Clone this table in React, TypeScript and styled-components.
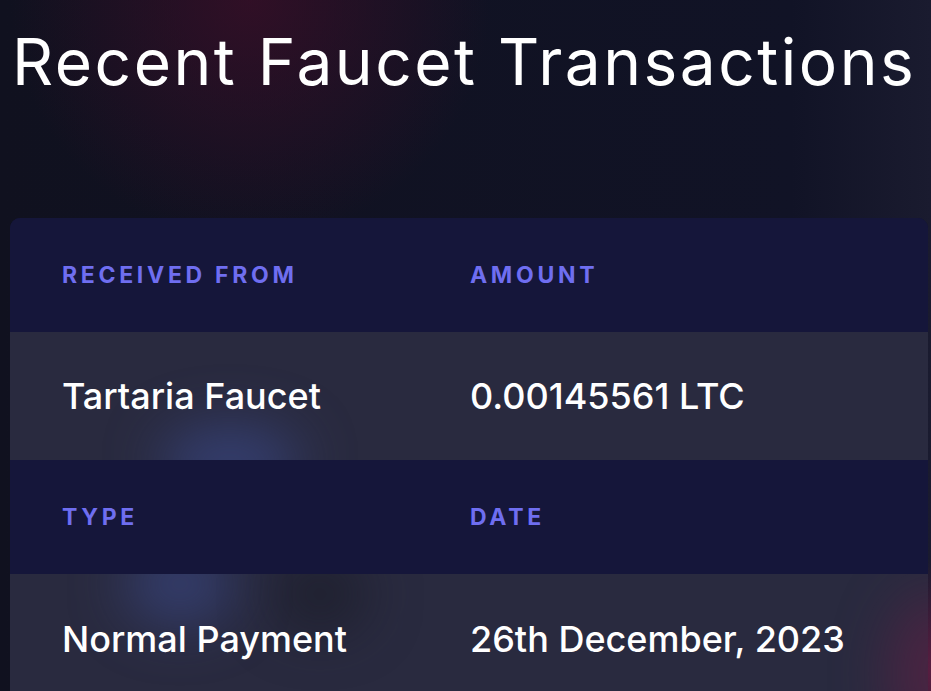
import React from "react";
import styled, { createGlobalStyle } from "styled-components";

const Global = createGlobalStyle`
  html, body { margin: 0; padding: 0; background: #10111f; }
  body { font-family: Inter, "Noto Sans", sans-serif; color: #fff; }
`;

const Page = styled.div`
  position: relative;
  width: 931px;
  height: 691px;
  overflow: hidden;
  background:
    radial-gradient(circle at 250px 0px, rgba(62, 14, 40, 0.7) 0px, rgba(62, 14, 40, 0) 240px),
    radial-gradient(circle at 940px 670px, rgba(110, 30, 70, 0.8) 0px, rgba(110, 30, 70, 0) 110px),
    linear-gradient(90deg, #10111f 0%, #111326 85%, #1a1b2f 100%);
  padding: 0 3px 0 10px;
  box-sizing: border-box;
  display: flex;
  flex-direction: column;
`;

const Title = styled.h1`
  margin: 25px 0 0 2px;
  font-family: Inter, sans-serif;
  font-weight: 400;
  font-size: 64px;
  line-height: 74px;
  letter-spacing: 2.5px;
  color: #ffffff;
  white-space: nowrap;
`;

const Card = styled.div`
  margin-top: 119px;
  border-radius: 10px 10px 0 0;
  overflow: hidden;
  background: #15163a;
`;

const Glow = styled.div`
  position: absolute;
  pointer-events: none;
  border-radius: 50%;
  filter: blur(28px);
`;

const HeadRow = styled.div`
  display: grid;
  grid-template-columns: 408px 1fr;
  align-items: center;
  height: 114px;
  padding-left: 52px;
  background: #15163a;
`;

const DataRow = styled.div<{ $h: number }>`
  display: grid;
  grid-template-columns: 408px 1fr;
  align-items: center;
  height: ${(p) => p.$h}px;
  padding-left: 52px;
  background: #292a3f;
  position: relative;
  overflow: hidden;
`;

const HeadCell = styled.div`
  font-family: Inter, sans-serif;
  font-weight: 700;
  font-size: 23px;
  letter-spacing: 3.7px;
  color: #6f6ef0;
  text-transform: uppercase;
`;

const Cell = styled.div`
  font-family: Inter, sans-serif;
  font-weight: 500;
  font-size: 36px;
  color: #ffffff;
  position: relative;
  z-index: 1;
`;

export default function App() {
  return (
    <>
      <Global />
      <Page>
        <Title>Recent Faucet Transactions</Title>
        <Card>
          <HeadRow>
            <HeadCell>Received From</HeadCell>
            <HeadCell>Amount</HeadCell>
          </HeadRow>
          <DataRow $h={128}>
            <Glow style={{ left: 150, top: 95, width: 140, height: 70, background: "rgba(62,78,150,0.6)" }} />
            <Cell>Tartaria Faucet</Cell>
            <Cell>0.00145561 LTC</Cell>
          </DataRow>
          <HeadRow>
            <HeadCell>Type</HeadCell>
            <HeadCell>Date</HeadCell>
          </HeadRow>
          <DataRow $h={130}>
            <Glow style={{ left: 115, top: -30, width: 110, height: 80, background: "rgba(62,78,150,0.55)" }} />
            <Glow style={{ left: 265, top: -15, width: 90, height: 70, background: "rgba(22,24,32,0.6)" }} />
            <Glow style={{ left: 880, top: 20, width: 90, height: 160, background: "rgba(110,30,70,0.5)" }} />
            <Cell>Normal Payment</Cell>
            <Cell>26th December, 2023</Cell>
          </DataRow>
        </Card>
      </Page>
    </>
  );
}
